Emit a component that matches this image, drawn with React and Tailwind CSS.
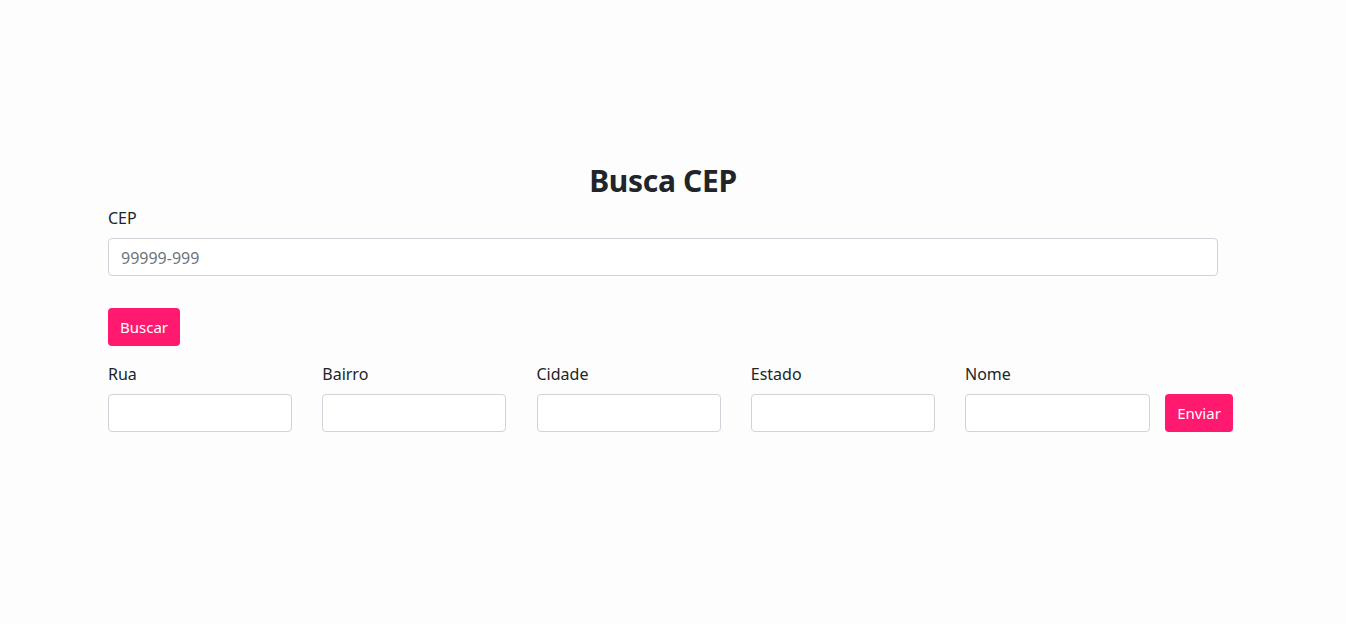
import React, { useState } from 'react';

const FIELDS = ['Rua', 'Bairro', 'Cidade', 'Estado', 'Nome'];

const inputCls =
  'block w-full h-[38px] px-3 border border-[#ced4da] rounded-[4px] bg-white text-[16px] text-[#212529] placeholder-[#6c757d] focus:outline-none';

const App = () => {
  const [cep, setCep] = useState('');

  return (
    <div
      className="min-h-screen bg-[#fdfdfd] text-[#212529] text-[16px] leading-[24px]"
      style={{ fontFamily: '"Segoe UI", "Noto Sans", "Open Sans", sans-serif' }}
    >
      <div className="w-[1110px] ml-[108px] pt-[160px]">
        <h1 className="text-center text-[30px] leading-[42px] font-bold tracking-[-0.3px] mb-[4px]">Busca CEP</h1>

        {/* CEP */}
        <label htmlFor="cep" className="block mb-[8px]">CEP</label>
        <input
          id="cep"
          type="text"
          placeholder="99999-999"
          value={cep}
          onChange={(e) => setCep(e.target.value)}
          className={inputCls + ' pt-[2px]'}
        />

        <button
          type="button"
          className="mt-[32px] h-[38px] w-[72px] rounded-[4px] bg-[#ff1a6f] text-white text-[15px] text-center"
        >
          Buscar
        </button>

        {/* Endereço */}
        <div className="flex items-end mt-[16px]">
          {FIELDS.map((f, i) => (
            <div key={f} className={i < 4 ? 'shrink-0 w-[184px] mr-[30.25px]' : 'shrink-0 w-[185px] mr-[15px]'}>
              <label className="block mb-[8px]">{f}</label>
              <input type="text" className={inputCls} />
            </div>
          ))}
          <button
            type="button"
            className="shrink-0 h-[38px] w-[68px] rounded-[4px] bg-[#ff1a6f] text-white text-[15px] text-center"
          >
            Enviar
          </button>
        </div>
      </div>
    </div>
  );
};

export default App;
